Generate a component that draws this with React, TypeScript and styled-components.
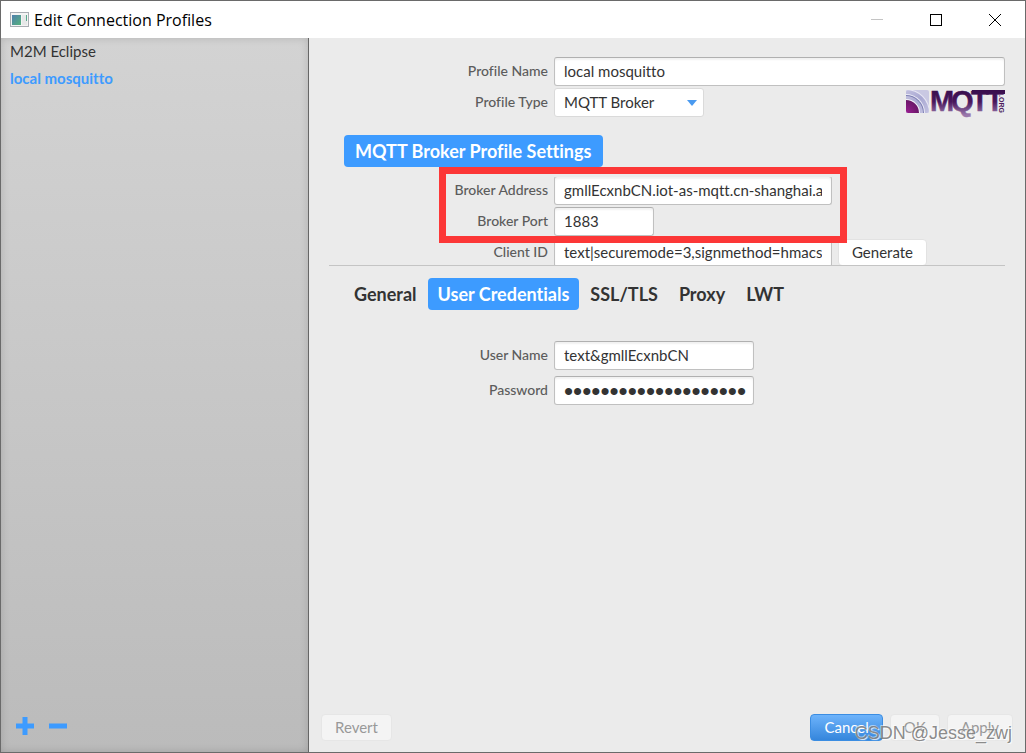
import React from "react";
import styled, { createGlobalStyle, css } from "styled-components";

const GlobalStyle = createGlobalStyle`
  *, *::before, *::after { box-sizing: border-box; }
  body { margin: 0; background: #ebebeb; }
  body, button, input, select {
    font-family: Lato, "Liberation Sans", sans-serif;
    font-size: 15px;
    font-variant-ligatures: none;
    color: #333;
  }
`;

const Window = styled.div`
  position: relative;
  display: flex;
  flex-direction: column;
  min-height: 100vh;
  border: 1px solid #6a6a6a;
  background: #ebebeb;
`;

const TitleBar = styled.header`
  display: flex;
  align-items: center;
  height: 37px;
  padding: 0 1px 0 9px;
  background: #fff;
`;

const Title = styled.h1`
  flex: 1;
  margin: 0 0 0 4px;
  font: 400 16px/20px "Open Sans", "Noto Sans", sans-serif;
  color: #000;
`;

const CaptionButton = styled.button`
  display: flex;
  align-items: center;
  justify-content: center;
  width: 59px;
  height: 37px;
  padding: 0;
  border: 0;
  background: none;
`;

const Body = styled.div`
  display: flex;
  flex: 1;
`;

const Sidebar = styled.aside`
  display: flex;
  flex-direction: column;
  flex: 0 0 308px;
  padding: 0 9px;
  border-right: 1px solid #666;
  background: linear-gradient(#d3d3d3, #bbb);
  box-shadow: inset 0 0 8px rgba(0, 0, 0, 0.15);
`;

const ProfileList = styled.ul`
  flex: 1;
  margin: 0;
  padding: 0;
  list-style: none;
`;

const ProfileItem = styled.li<{ $selected?: boolean }>`
  line-height: 27px;
  color: ${(p) => (p.$selected ? "#3d9bff" : "#333")};
  font-weight: ${(p) => (p.$selected ? 700 : 400)};
`;

const ListActions = styled.div`
  display: flex;
  gap: 15px;
  padding: 0 6px 17px;
`;

const IconButton = styled.button`
  width: 18px;
  height: 18px;
  padding: 0;
  border: 0;
  background: none;
  svg { display: block; }
`;

const Main = styled.main`
  display: flex;
  flex: 1;
  flex-direction: column;
  min-width: 0;
`;

const Form = styled.form`
  flex: 1;
  padding: 19px 20px 0;
`;

const Rows = styled.div<{ $gap: number }>`
  display: flex;
  flex-direction: column;
  gap: ${(p) => p.$gap}px;
`;

const Row = styled.div`
  display: flex;
  gap: 6px;
  height: 29px;
`;

const Label = styled.label`
  flex: 0 0 219px;
  line-height: 27px;
  text-align: right;
  color: #5c5c5c;
  font-size: 14px;
  font-weight: 500;
`;

const fieldBox = css`
  height: 29px;
  padding: 0 9px 2px;
  border-radius: 3px;
  background: #fff;
`;

const TextField = styled.input<{ $width?: number }>`
  ${fieldBox}
  ${(p) => (p.$width ? `flex: 0 0 ${p.$width}px; width: ${p.$width}px;` : "flex: 1;")}
  min-width: 0;
  border: 1px solid #c0c0c0;
  border-top-color: #b0b0b0;
  box-shadow: inset 0 2px 2px rgba(0, 0, 0, 0.06);
  &[type="password"] {
    padding: 2px 6px 0 9px;
    font-family: "Liberation Sans", sans-serif;
    font-size: 26px;
  }
`;

const SelectWrap = styled.div`
  position: relative;
  width: 150px;
  svg {
    position: absolute;
    top: 12px;
    right: 7px;
    pointer-events: none;
  }
`;

const Select = styled.select`
  ${fieldBox}
  width: 100%;
  border: 1px solid #dadada;
  appearance: none;
`;

const LogoSlot = styled.div`
  margin-left: auto;
  padding-top: 1px;
  svg { display: block; overflow: visible; }
`;

const pill = css`
  height: 32px;
  padding: 0 10px;
  border-radius: 4px;
  font-size: 18px;
  font-weight: 700;
  line-height: 32px;
  white-space: nowrap;
`;

const SectionTitle = styled.h2`
  ${pill}
  width: fit-content;
  padding: 0 12px 0 11px;
  margin: 18px 0 0 15px;
  background: #3d9bff;
  color: #fff;
`;

const BrokerPanel = styled.section`
  position: relative;
  margin-top: 10px;
`;

const BrokerScroll = styled.div`
  height: 89px;
  overflow: hidden;
  border-bottom: 1px solid #c4c4c4;
  ${Rows} { margin-top: -1px; }
`;

const Highlight = styled.div`
  position: absolute;
  top: -10px;
  left: 110px;
  width: 408px;
  height: 76px;
  border: 7px solid #fc3737;
  pointer-events: none;
`;

const Tabs = styled.div`
  display: flex;
  gap: 1px;
  margin: 12px 0 31px 15px;
`;

const Tab = styled.button<{ $active?: boolean }>`
  ${pill}
  border: 0;
  background: ${(p) => (p.$active ? "#3d9bff" : "transparent")};
  color: ${(p) => (p.$active ? "#fff" : "#333")};
`;

const Button = styled.button<{ $primary?: boolean }>`
  height: 27px;
  padding: 0 13px;
  border: 1px solid #e2e2e2;
  border-radius: 4px;
  background: #fff;
  line-height: 25px;
  &:disabled {
    border-color: #e6e6e6;
    background: #f4f4f4;
    color: #999;
  }
  ${(p) =>
    p.$primary &&
    css`
      border-color: #3b8de2;
      background: linear-gradient(#6db3fb, #3586dc);
      color: #fff;
    `}
  ${Row} & { margin-top: 1px; }
`;

const Footer = styled.footer`
  display: flex;
  gap: 7px;
  padding: 0 12px 11px;
`;

const Spacer = styled.span`
  flex: 1;
`;

const Watermark = styled.div`
  position: absolute;
  right: 13px;
  bottom: 7px;
  font: 400 18px/24px "Liberation Sans", sans-serif;
  color: rgba(125, 125, 125, 0.9);
  text-shadow: 1px 1px 1px rgba(255, 255, 255, 0.9), -1px -1px 0 rgba(255, 255, 255, 0.5);
  pointer-events: none;
`;

const AppIcon = () => (
  <svg width="20" height="16" viewBox="0 0 20 16" aria-hidden="true">
    <defs>
      <linearGradient id="pane" x1="0" y1="0" x2="1" y2="1">
        <stop offset="0" stopColor="#4f7fae" />
        <stop offset="1" stopColor="#55b27c" />
      </linearGradient>
    </defs>
    <rect x="0.5" y="0.5" width="18" height="14" fill="#f4f4f4" stroke="#a9adb3" />
    <rect x="2" y="3" width="9" height="10" fill="url(#pane)" />
    <rect x="12" y="3" width="5" height="10" fill="#e6e8e8" />
    <rect x="16" y="3" width="1" height="6" fill="#58a98c" />
  </svg>
);

const MqttLogo = () => (
  <svg width="100" height="26" viewBox="0 0 100 26" role="img" aria-label="MQTT.org">
    <defs>
      <linearGradient id="ink" gradientUnits="userSpaceOnUse" x1="0" y1="2" x2="0" y2="26">
        <stop offset="0" stopColor="#3a0f4e" />
        <stop offset="0.45" stopColor="#48175c" />
        <stop offset="1" stopColor="#9a78ac" />
      </linearGradient>
      <linearGradient id="wave" x1="0" y1="0" x2="1" y2="1">
        <stop offset="0" stopColor="#d9d7ec" />
        <stop offset="0.5" stopColor="#a9a8d2" />
        <stop offset="1" stopColor="#dddcf0" />
      </linearGradient>
      <radialGradient id="core" gradientUnits="userSpaceOnUse" cx="1" cy="24" r="13">
        <stop offset="0" stopColor="#9b1f92" />
        <stop offset="1" stopColor="#6a1668" />
      </radialGradient>
      <clipPath id="tile">
        <rect x="1" y="1" width="23" height="23" rx="2" />
      </clipPath>
    </defs>
    <g clipPath="url(#tile)">
      <rect x="1" y="1" width="23" height="23" fill="#c9c8e2" />
      <circle cx="1" cy="24" r="24" fill="#e8e7f4" />
      <circle cx="1" cy="24" r="23" fill="url(#wave)" />
      <circle cx="1" cy="24" r="19" fill="#ecebf7" />
      <circle cx="1" cy="24" r="18" fill="#7c7eb2" />
      <circle cx="1" cy="24" r="17" fill="url(#wave)" />
      <circle cx="1" cy="24" r="14" fill="#f4f3fa" />
      <circle cx="1" cy="24" r="13" fill="url(#core)" />
    </g>
    <text
      x="25 46 66 81"
      y="22"
      fontFamily="Liberation Sans, sans-serif"
      fontWeight="700"
      fontSize="29"
      fill="url(#ink)"
      stroke="url(#ink)"
      strokeWidth="0.5"
    >
      MQTT
    </text>
    <rect x="67" y="1" width="33" height="4" fill="url(#ink)" />
    <text
      transform="translate(94 6) rotate(90)"
      fontFamily="Liberation Sans, sans-serif"
      fontWeight="700"
      fontSize="7"
      fill="#4a1a5e"
    >
      .ORG
    </text>
  </svg>
);

export default function App() {
  return (
    <Window>
      <GlobalStyle />
      <TitleBar>
        <AppIcon />
        <Title>Edit Connection Profiles</Title>
        <CaptionButton type="button" aria-label="Minimize">
          <svg width="12" height="12"><path d="M0 5.5H12" stroke="#c4c4c4" /></svg>
        </CaptionButton>
        <CaptionButton type="button" aria-label="Maximize">
          <svg width="12" height="12"><rect x="0.5" y="0.5" width="11" height="11" fill="none" stroke="#000" /></svg>
        </CaptionButton>
        <CaptionButton type="button" aria-label="Close">
          <svg width="12" height="12"><path d="M0 0L12 12M12 0L0 12" stroke="#000" /></svg>
        </CaptionButton>
      </TitleBar>
      <Body>
        <Sidebar>
          <ProfileList>
            <ProfileItem>M2M Eclipse</ProfileItem>
            <ProfileItem $selected>local mosquitto</ProfileItem>
          </ProfileList>
          <ListActions>
            <IconButton type="button" aria-label="Add profile">
              <svg width="18" height="18"><path d="M0 9H18M9 0V18" stroke="#3d9bff" strokeWidth="5" /></svg>
            </IconButton>
            <IconButton type="button" aria-label="Remove profile">
              <svg width="18" height="18"><path d="M0 9H18" stroke="#3d9bff" strokeWidth="5" /></svg>
            </IconButton>
          </ListActions>
        </Sidebar>
        <Main>
          <Form>
            <Rows $gap={2}>
              <Row>
                <Label htmlFor="name">Profile Name</Label>
                <TextField id="name" defaultValue="local mosquitto" />
              </Row>
              <Row>
                <Label htmlFor="type">Profile Type</Label>
                <SelectWrap>
                  <Select id="type"><option>MQTT Broker</option></Select>
                  <svg width="10" height="6"><path d="M0 0H10L5 6Z" fill="#4a9af0" /></svg>
                </SelectWrap>
                <LogoSlot><MqttLogo /></LogoSlot>
              </Row>
            </Rows>
            <SectionTitle>MQTT Broker Profile Settings</SectionTitle>
            <BrokerPanel>
              <BrokerScroll>
                <Rows $gap={2}>
                  <Row>
                    <Label htmlFor="address">Broker Address</Label>
                    <TextField id="address" $width={278} defaultValue="gmllEcxnbCN.iot-as-mqtt.cn-shanghai.a" />
                  </Row>
                  <Row>
                    <Label htmlFor="port">Broker Port</Label>
                    <TextField id="port" $width={100} defaultValue="1883" />
                  </Row>
                  <Row>
                    <Label htmlFor="client">Client ID</Label>
                    <TextField id="client" $width={278} defaultValue="text|securemode=3,signmethod=hmacs" />
                    <Button type="button">Generate</Button>
                  </Row>
                </Rows>
              </BrokerScroll>
              <Highlight />
            </BrokerPanel>
            <Tabs role="tablist">
              <Tab type="button" role="tab">General</Tab>
              <Tab type="button" role="tab" aria-selected $active>User Credentials</Tab>
              <Tab type="button" role="tab">SSL/TLS</Tab>
              <Tab type="button" role="tab">Proxy</Tab>
              <Tab type="button" role="tab">LWT</Tab>
            </Tabs>
            <Rows $gap={6}>
              <Row>
                <Label htmlFor="user">User Name</Label>
                <TextField id="user" $width={200} defaultValue="text&amp;gmllEcxnbCN" />
              </Row>
              <Row>
                <Label htmlFor="password">Password</Label>
                <TextField id="password" type="password" $width={200} defaultValue="00000000000000000000" />
              </Row>
            </Rows>
          </Form>
          <Footer>
            <Button type="button" disabled>Revert</Button>
            <Spacer />
            <Button type="button" $primary>Cancel</Button>
            <Button type="button" disabled>OK</Button>
            <Button type="button" disabled>Apply</Button>
          </Footer>
        </Main>
      </Body>
      <Watermark>CSDN @Jesse_zwj</Watermark>
    </Window>
  );
}
